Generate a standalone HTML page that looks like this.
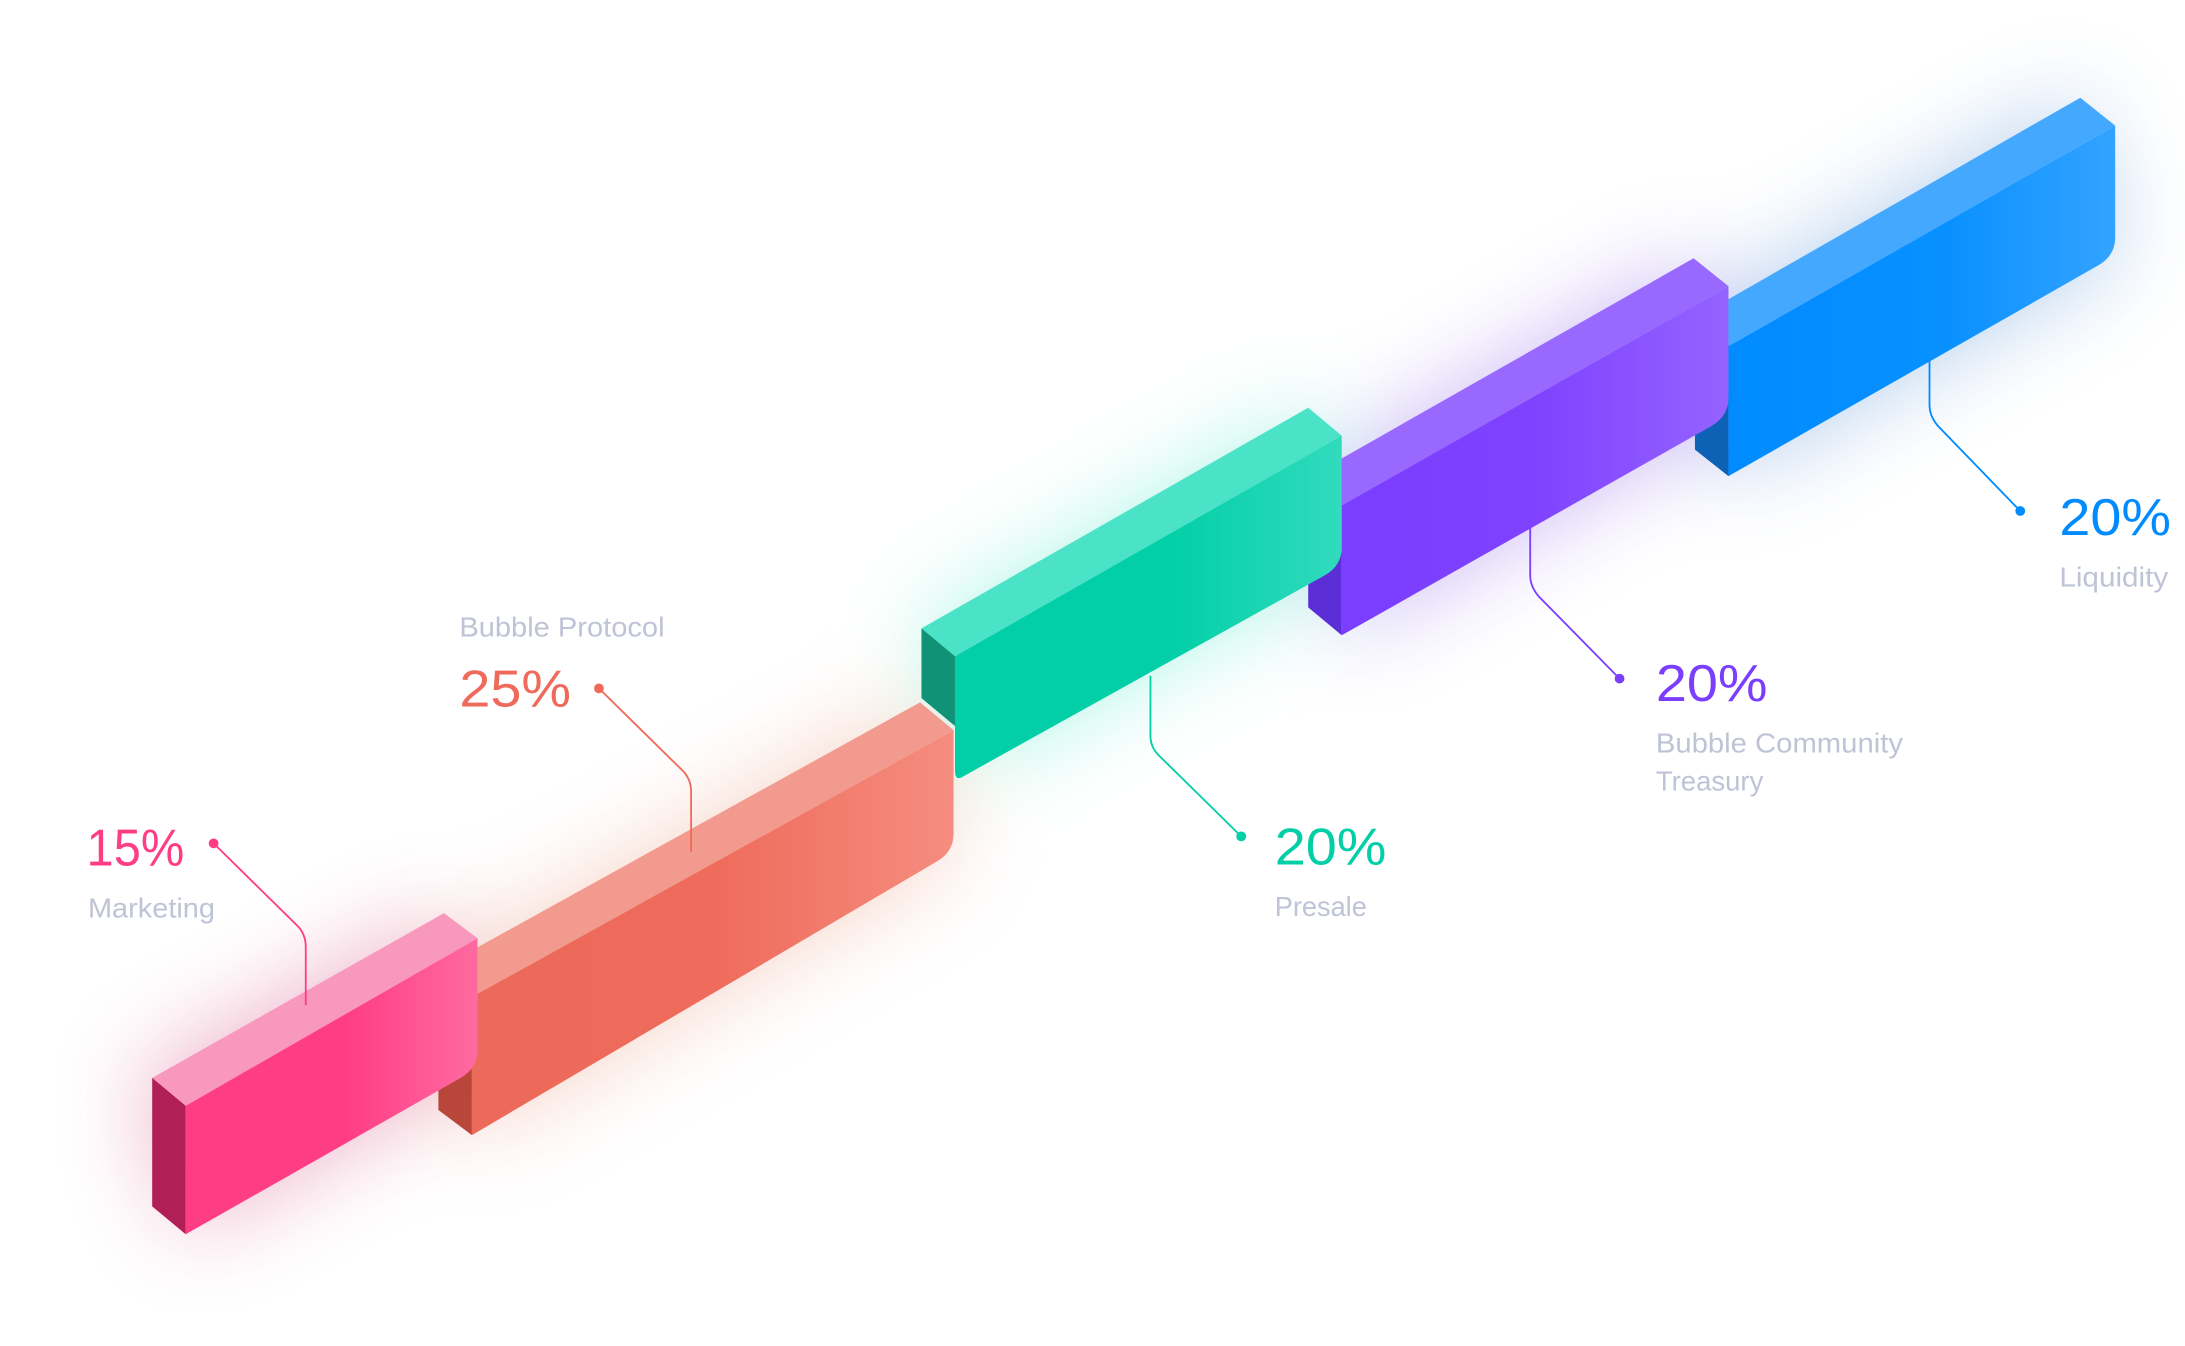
<!DOCTYPE html>
<html><head><meta charset="utf-8"><style>
html,body{margin:0;padding:0;background:#fff;}
svg{display:block;}
.pct{font-family:"Liberation Sans",sans-serif;font-size:37px;}
.lbl{font-family:"Liberation Sans",sans-serif;font-size:20px;fill:#bfc3d6;}
</style></head><body>
<svg width="2185" height="1346" viewBox="0 0 1565 964" preserveAspectRatio="none" xmlns="http://www.w3.org/2000/svg">
<defs>
<filter id="b" x="-50%" y="-50%" width="200%" height="200%"><feGaussianBlur stdDeviation="34"/></filter>
<linearGradient id="gP" x1="0" x2="1"><stop offset="0" stop-color="#ff3d85"/><stop offset=".55" stop-color="#ff3d85"/><stop offset="1" stop-color="#ff6aa0"/></linearGradient>
<linearGradient id="gC" x1="0" x2="1"><stop offset="0" stop-color="#ec6a5a"/><stop offset=".5" stop-color="#ef6b5b"/><stop offset="1" stop-color="#f58d80"/></linearGradient>
<linearGradient id="gT" x1="0" x2="1"><stop offset="0" stop-color="#02cfa7"/><stop offset=".55" stop-color="#02cfa7"/><stop offset="1" stop-color="#31dbbd"/></linearGradient>
<linearGradient id="gV" x1="0" x2="1"><stop offset="0" stop-color="#7b3dfe"/><stop offset=".5" stop-color="#7f42ff"/><stop offset="1" stop-color="#9563ff"/></linearGradient>
<linearGradient id="gB" x1="0" x2="1"><stop offset="0" stop-color="#008bff"/><stop offset=".55" stop-color="#0890ff"/><stop offset="1" stop-color="#33a3ff"/></linearGradient>
</defs>

<g filter="url(#b)" opacity=".38">
<polygon points="1214,228 1490,70 1515,183 1238,341" fill="#3a7fd0"/>
<polygon points="937,342 1213,185 1238,298 961,455" fill="#7b4ce8"/>
<polygon points="660,450 937,292 961,405 684,558" fill="#36e6c0"/>
<polygon points="314,694 659,503 683,610 338,813" fill="#e98a6a"/>
<polygon points="100,772 318,654 342,765 133,884" fill="#d2386e"/>
</g>

<polygon points="1214,228 1490,70 1515,90 1238,248" fill="#45a8ff"/>
<polygon points="1214,228 1238,248 1238,341 1214,322" fill="#0d62b5"/>
<path d="M1238,248 L1515,90 L1515,170 Q1515,183 1503,190 L1238,341 Z" fill="url(#gB)"/>
<polygon points="937,342 1213,185 1238,205 961,362" fill="#9868ff"/>
<polygon points="937,342 961,362 961,455 937,435" fill="#5b2ed6"/>
<path d="M961,362 L1238,205 L1238,285 Q1238,298 1226,305 L961,455 Z" fill="url(#gV)"/>
<polygon points="314,694 659,503 683,523 338,714" fill="#f39a8f"/>
<polygon points="314,694 338,714 338,813 314,795" fill="#b8463a"/>
<path d="M338,714 L683,523 L683,597 Q683,610 671,617 L338,813 Z" fill="url(#gC)"/>
<polygon points="660,450 937,292 961,312 684,470" fill="#4ae3c7"/>
<polygon points="660,450 684,470 684,520 660,500" fill="#0f9275"/>
<path d="M684,470 L961,312 L961,392 Q961,405 949,412 L690,556 Q684,560 684,552 Z" fill="url(#gT)"/>
<polygon points="109,772 318,654 342,672 133,792" fill="#f998bd"/>
<polygon points="109,772 133,792 133,884 109,864" fill="#b01f55"/>
<path d="M133,792 L342,672 L342,752 Q342,765 330,772 L133,884 Z" fill="url(#gP)"/>

<g fill="none" stroke-width="1.3">
<path d="M153,604 L214,664 Q219,670 219,678 L219,720" stroke="#ff3d85"/>
<path d="M429,493 L490,553 Q495,559 495,567 L495,610" stroke="#ef6a5a"/>
<path d="M824,484 L824,527 Q824,535 830,541 L889,599" stroke="#02cfa7"/>
<path d="M1096,378 L1096,412 Q1096,420 1102,427 L1160,486" stroke="#7b3dfe"/>
<path d="M1382,258 L1382,290 Q1382,298 1388,305 L1447,366" stroke="#008bff"/>
</g>
<circle cx="153" cy="604" r="3.5" fill="#ff3d85"/>
<circle cx="429" cy="493" r="3.5" fill="#ef6a5a"/>
<circle cx="889" cy="599" r="3.5" fill="#02cfa7"/>
<circle cx="1160" cy="486" r="3.5" fill="#7b3dfe"/>
<circle cx="1447" cy="366" r="3.5" fill="#008bff"/>

<text class="pct" x="62" y="620" fill="#ff3d85" textLength="70" lengthAdjust="spacingAndGlyphs">15%</text>
<text class="lbl" x="63" y="657" textLength="91" lengthAdjust="spacingAndGlyphs">Marketing</text>
<text class="lbl" x="329" y="456" textLength="147" lengthAdjust="spacingAndGlyphs">Bubble Protocol</text>
<text class="pct" x="329" y="506" fill="#ef6a5a" textLength="80" lengthAdjust="spacingAndGlyphs">25%</text>
<text class="pct" x="913" y="619" fill="#02cfa7" textLength="80" lengthAdjust="spacingAndGlyphs">20%</text>
<text class="lbl" x="913" y="656" textLength="66" lengthAdjust="spacingAndGlyphs">Presale</text>
<text class="pct" x="1186" y="502" fill="#7b3dfe" textLength="80" lengthAdjust="spacingAndGlyphs">20%</text>
<text class="lbl" x="1186" y="539" textLength="177" lengthAdjust="spacingAndGlyphs">Bubble Community</text>
<text class="lbl" x="1186" y="566" textLength="77" lengthAdjust="spacingAndGlyphs">Treasury</text>
<text class="pct" x="1475" y="383" fill="#008bff" textLength="80" lengthAdjust="spacingAndGlyphs">20%</text>
<text class="lbl" x="1475" y="420" textLength="78" lengthAdjust="spacingAndGlyphs">Liquidity</text>
</svg>
</body></html>
